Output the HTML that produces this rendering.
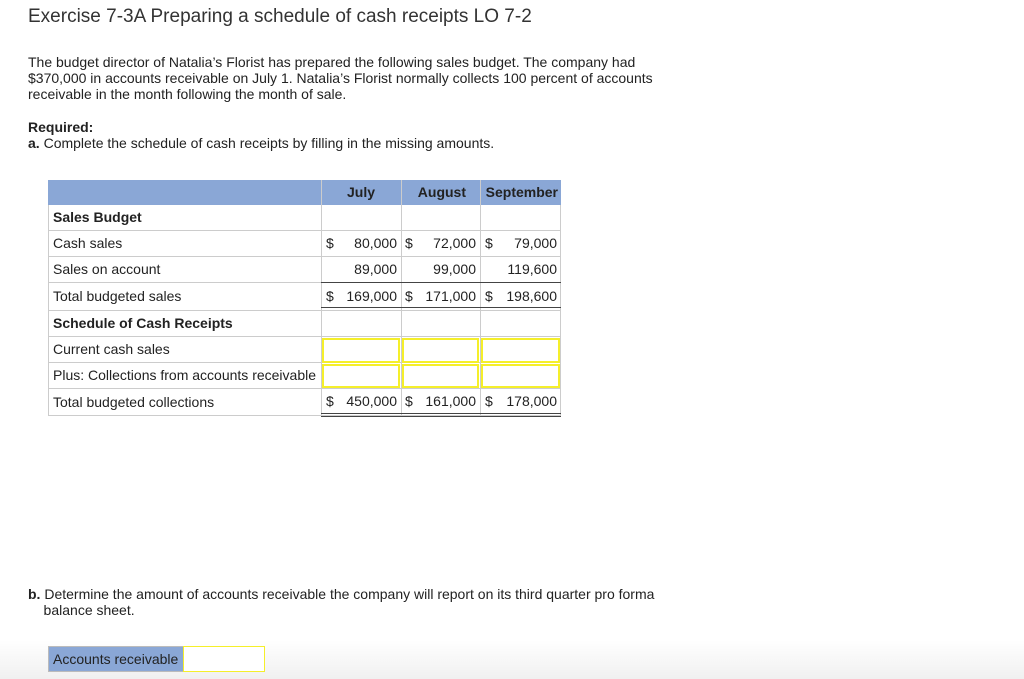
<!DOCTYPE html>
<html><head><meta charset="utf-8"><style>
body{margin:0;width:1024px;height:679px;background:#fff;font-family:"Liberation Sans",Arial,sans-serif;color:#222;position:relative;overflow:hidden}
.a{position:absolute;white-space:nowrap}
.p{font-size:14px;line-height:16px}
.c{position:absolute;box-sizing:border-box;font-size:14px;line-height:25px;white-space:nowrap}
.hd{background:#8aa7d6}
.bb{border-bottom:1px solid #ccc}
.y{position:absolute;border:2px solid #f5ef2a;background:#fff;box-sizing:border-box}
.r{text-align:right;padding-right:4px}
b{font-weight:bold}
</style></head><body>
<div class="a" style="left:28px;top:6px;font-size:19px;color:#333">Exercise 7-3A Preparing a schedule of cash receipts LO 7-2</div>
<div class="a p" style="left:28px;top:54px">The budget director of Natalia’s Florist has prepared the following sales budget. The company had<br>$370,000 in accounts receivable on July 1. Natalia’s Florist normally collects 100 percent of accounts<br>receivable in the month following the month of sale.</div>
<div class="a p" style="left:28px;top:119px"><b>Required:</b><br><b>a.</b> Complete the schedule of cash receipts by filling in the missing amounts.</div>

<div style="position:absolute;left:48px;top:180px;width:513px;height:236px;border:1px solid #ccc;box-sizing:border-box"></div>
<div class="c hd" style="left:48px;top:180px;width:513px;height:25px"></div>
<div class="c" style="left:321px;top:180px;width:80px;height:236px;border-left:1px solid #ccc"></div>
<div class="c" style="left:401px;top:180px;width:79px;height:236px;border-left:1px solid #ccc"></div>
<div class="c" style="left:480px;top:180px;width:81px;height:236px;border-left:1px solid #ccc"></div>
<div class="c" style="left:321px;top:180px;width:80px;text-align:center;font-weight:bold">July</div>
<div class="c" style="left:401px;top:180px;width:79px;text-align:right;padding-right:14px;font-weight:bold">August</div>
<div class="c" style="left:480px;top:180px;width:81px;text-align:right;padding-right:3px;font-weight:bold">September</div>

<div class="c bb" style="left:48px;top:205px;width:513px;height:26px;padding-left:5px"><b>Sales Budget</b></div>
<div class="c bb" style="left:48px;top:231px;width:513px;height:26px;padding-left:5px">Cash sales</div>
<div class="c bb" style="left:48px;top:257px;width:273px;height:26px;padding-left:5px">Sales on account</div>
<div class="c" style="left:321px;top:282px;width:240px;border-top:1px solid #444"></div>
<div class="c" style="left:48px;top:283px;width:273px;height:27px;padding-left:5px;line-height:27px">Total budgeted sales</div>
<div class="c" style="left:321px;top:307px;width:240px;height:4px;border-top:1px solid #444;border-bottom:1px solid #444"></div>
<div class="c bb" style="left:48px;top:310px;width:513px;height:27px;padding-left:5px;border-top:1px solid #ccc"><b>Schedule of Cash Receipts</b></div>
<div class="c bb" style="left:48px;top:337px;width:513px;height:26px;padding-left:5px">Current cash sales</div>
<div class="c bb" style="left:48px;top:363px;width:513px;height:26px;padding-left:5px">Plus: Collections from accounts receivable</div>
<div class="c" style="left:48px;top:389px;width:273px;height:27px;padding-left:5px;line-height:27px">Total budgeted collections</div>
<div class="c" style="left:321px;top:413px;width:240px;height:4px;border-top:1px solid #444;border-bottom:1px solid #444"></div>

<div class="c" style="left:326px;top:231px">$</div><div class="c r" style="left:321px;top:231px;width:80px">80,000</div>
<div class="c" style="left:405px;top:231px">$</div><div class="c r" style="left:401px;top:231px;width:79px">72,000</div>
<div class="c" style="left:485px;top:231px">$</div><div class="c r" style="left:480px;top:231px;width:81px">79,000</div>
<div class="c r" style="left:321px;top:257px;width:80px">89,000</div>
<div class="c r" style="left:401px;top:257px;width:79px">99,000</div>
<div class="c r" style="left:480px;top:257px;width:81px">119,600</div>
<div class="c" style="left:326px;top:284px">$</div><div class="c r" style="left:321px;top:284px;width:80px">169,000</div>
<div class="c" style="left:405px;top:284px">$</div><div class="c r" style="left:401px;top:284px;width:79px">171,000</div>
<div class="c" style="left:485px;top:284px">$</div><div class="c r" style="left:480px;top:284px;width:81px">198,600</div>
<div class="c" style="left:326px;top:389px">$</div><div class="c r" style="left:321px;top:389px;width:80px">450,000</div>
<div class="c" style="left:405px;top:389px">$</div><div class="c r" style="left:401px;top:389px;width:79px">161,000</div>
<div class="c" style="left:485px;top:389px">$</div><div class="c r" style="left:480px;top:389px;width:81px">178,000</div>

<div class="y" style="left:322px;top:338px;width:78px;height:25px"></div>
<div class="y" style="left:402px;top:338px;width:77px;height:25px"></div>
<div class="y" style="left:481px;top:338px;width:79px;height:25px"></div>
<div class="y" style="left:322px;top:364px;width:78px;height:24px"></div>
<div class="y" style="left:402px;top:364px;width:77px;height:24px"></div>
<div class="y" style="left:481px;top:364px;width:79px;height:24px"></div>

<div style="position:absolute;left:0;top:640px;width:1024px;height:39px;background:linear-gradient(#fff,#f0f0f0)"></div>
<div class="a p" style="left:28px;top:586px"><b>b.</b> Determine the amount of accounts receivable the company will report on its third quarter pro forma<br>&nbsp;&nbsp;&nbsp;&nbsp;balance sheet.</div>
<div class="c hd" style="left:48px;top:646px;width:136px;height:26px;padding-left:4px;border:1px solid #bbb">Accounts receivable</div>
<div class="y" style="left:183px;top:646px;width:82px;height:26px;border-width:1px;background:#fff"></div>
</body></html>
